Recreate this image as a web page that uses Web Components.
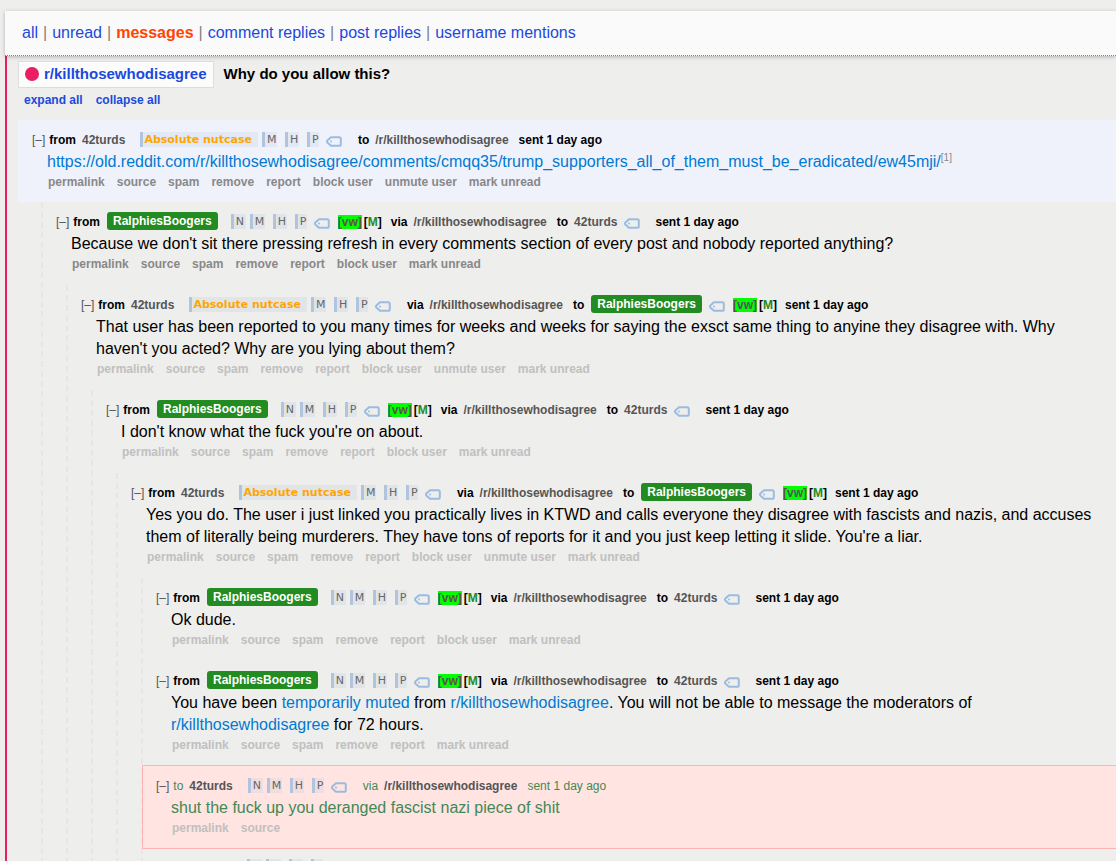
<!DOCTYPE html>
<html lang="en">
<head>
<meta charset="utf-8">
<title>messages</title>
<style>
  html { background:#fff; }
  body {
    margin:0;
    height:calc(100vh - 3px);
    overflow:hidden;
    background:#eeeeec;
    color:#000;
    font:12px/16px "Liberation Sans", Arial, sans-serif;
  }
</style>
</head>
<body>
<inbox-page>
  <menu-tabs slot="menu" items="all,unread,messages,comment replies,post replies,username mentions" current="messages"></menu-tabs>
  <mail-thread sub="r/killthosewhodisagree" subject="Why do you allow this?">
    <mail-message root user="42turds" flair="Absolute nutcase" tags="M H P" to="/r/killthosewhodisagree" actions="permalink,source,spam,remove,report,block user,unmute user,mark unread">
      <mail-link note="[1]">https://old.reddit.com/r/killthosewhodisagree/comments/cmqq35/trump_supporters_all_of_them_must_be_eradicated/ew45mji/</mail-link>
      <mail-message slot="replies" mod user="RalphiesBoogers" tags="N M H P" via="/r/killthosewhodisagree" to="42turds" actions="permalink,source,spam,remove,report,block user,mark unread">
        Because we don't sit there pressing refresh in every comments section of every post and nobody reported anything?
        <mail-message slot="replies" dim user="42turds" flair="Absolute nutcase" tags="M H P" via="/r/killthosewhodisagree" to="RalphiesBoogers" actions="permalink,source,spam,remove,report,block user,unmute user,mark unread">
          That user has been reported to you many times for weeks and weeks for saying the exsct same thing to anyine they disagree with. Why haven't you acted? Why are you lying about them?
          <mail-message slot="replies" dim mod user="RalphiesBoogers" tags="N M H P" via="/r/killthosewhodisagree" to="42turds" actions="permalink,source,spam,remove,report,block user,mark unread">
            I don't know what the fuck you're on about.
            <mail-message slot="replies" dim user="42turds" flair="Absolute nutcase" tags="M H P" via="/r/killthosewhodisagree" to="RalphiesBoogers" actions="permalink,source,spam,remove,report,block user,unmute user,mark unread">
              Yes you do. The user i just linked you practically lives in KTWD and calls everyone they disagree with fascists and nazis, and accuses them of literally being murderers. They have tons of reports for it and you just keep letting it slide. You're a liar.
              <mail-message slot="replies" dim mod user="RalphiesBoogers" tags="N M H P" via="/r/killthosewhodisagree" to="42turds" actions="permalink,source,spam,remove,report,block user,mark unread">Ok dude.</mail-message>
              <mail-message slot="replies" dim mod user="RalphiesBoogers" tags="N M H P" via="/r/killthosewhodisagree" to="42turds" actions="permalink,source,spam,remove,report,mark unread">You have been <mail-link>temporarily muted</mail-link> from <mail-link>r/killthosewhodisagree</mail-link>. You will not be able to message the moderators of <mail-link>r/killthosewhodisagree</mail-link> for 72 hours.</mail-message>
              <mail-message slot="replies" dim reported user="42turds" tags="N M H P" via="/r/killthosewhodisagree" actions="permalink,source">shut the fuck up you deranged fascist nazi piece of shit</mail-message>
              <mail-message slot="replies" dim next user="" tags="N M H P" actions=""></mail-message>
            </mail-message>
          </mail-message>
        </mail-message>
      </mail-message>
    </mail-message>
  </mail-thread>
</inbox-page>

<script>
// inbox-page - menu bar on top, threads below
class InboxPage extends HTMLElement {
  constructor() {
    super();
    this.attachShadow({ mode: 'open' });
  }

  connectedCallback() {
    this.shadowRoot.innerHTML = `
      <style>
        :host { display:block; padding:11px 0 0 5px; }
        header {
          position:relative;
          background:#fafafa;
          border-bottom:1px dotted gray;
          box-shadow:0 1px 4px rgba(0,0,0,0.25);
        }
      </style>
      <header><slot name="menu"></slot></header>
      <main><slot></slot></main>
    `;
  }
}

class MenuTabs extends HTMLElement {
  constructor() {
    super();
    this.attachShadow({ mode: 'open' });
  }

  connectedCallback() {
    const current = this.getAttribute('current');
    const links = this.getAttribute('items').split(',').map(item =>
      `<a href="#"${item === current ? ' class="current"' : ''}>${item}</a>`);
    this.shadowRoot.innerHTML = `
      <style>
        :host { display:block; }
        nav { display:flex; gap:5px; padding:11px 17px; font-size:16px; line-height:22px; color:gray; white-space:nowrap; }
        a { color:#1a49dd; text-decoration:none; }
        .current { color:#ff4500; font-weight:bold; }
      </style>
      <nav>${links.join('<span>|</span>')}</nav>
    `;
  }
}

class MailThread extends HTMLElement {
  constructor() {
    super();
    this.attachShadow({ mode: 'open' });
  }

  connectedCallback() {
    this.shadowRoot.innerHTML = `
      <style>
        :host { display:block; border-left:2px solid #e91e63; padding:5px 0 0 11px; }
        a { color:#1a49dd; text-decoration:none; }
        .subject { display:flex; gap:10px; font-size:15px; line-height:24px; font-weight:bold; }
        .sub { display:flex; align-items:center; gap:5px; padding:0 6px 1px; background:#fcfcfc; border:1px solid #ddd; }
        .dot { width:14px; height:14px; border-radius:50%; background:#e91e63; }
        h1 { margin:1px 0 0; font:inherit; }
        .controls { display:flex; gap:13px; padding:4px 6px 12px; font-weight:bold; }
      </style>
      <div class="subject">
        <a class="sub" href="#"><span class="dot"></span>${this.getAttribute('sub')}</a>
        <h1>${this.getAttribute('subject')}</h1>
      </div>
      <div class="controls"><a href="#">expand all</a><a href="#">collapse all</a></div>
      <slot></slot>
    `;
  }
}

// mail-link - link in a message body, with an optional footnote number
class MailLink extends HTMLElement {
  constructor() {
    super();
    this.attachShadow({ mode: 'open' });
  }

  connectedCallback() {
    const note = this.getAttribute('note');
    this.shadowRoot.innerHTML = `
      <style>
        :host { display:inline; }
        a { color:#0079d3; text-decoration:none; }
        sup { font-size:10px; line-height:0; color:#888; }
      </style><a href="#"><slot></slot></a>${note ? `<sup>${note}</sup>` : ''}`;
  }
}

// user-tag - outline of a label, used to tag a user
class UserTag extends HTMLElement {
  constructor() {
    super();
    this.attachShadow({ mode: 'open' });
  }

  connectedCallback() {
    this.shadowRoot.innerHTML = `
      <style>
        :host { display:block; width:16px; height:11px; }
        svg { display:block; }
      </style>
      <svg width="16" height="11" viewBox="0 0 16 11">
        <path d="M5 1.2H13.2Q14.8 1.2 14.8 2.8V8.2Q14.8 9.8 13.2 9.8H5L1.3 6.4Q.6 5.5 1.3 4.6Z" fill="none" stroke="#9bbce0" stroke-width="2" stroke-linejoin="round"/>
        <circle cx="5" cy="5.5" r="1" fill="#9bbce0"/>
      </svg>
    `;
  }
}

// mail-message - one message, with its replies in the "replies" slot
class MailMessage extends HTMLElement {
  constructor() {
    super();
    this.attachShadow({ mode: 'open' });
  }

  userLink(name) {
    const mod = name === 'RalphiesBoogers';
    return `<a href="#" class="${mod ? 'chip' : 'name'}">${name}</a>`;
  }

  tagline() {
    const user = this.getAttribute('user');
    const flair = this.getAttribute('flair');
    const via = this.getAttribute('via');
    const to = this.getAttribute('to');
    const reported = this.hasAttribute('reported');
    const modMarks = '<span class="vw">[vw]</span><span class="m">[<b>M</b>]</span>';
    const tags = this.getAttribute('tags').split(' ').map(t => `<span class="note ${t}">${t}</span>`).join('');

    let html = `<a href="#" class="toggle">[–]</a><span class="from">${reported ? 'to' : 'from'}</span>`;
    html += this.userLink(user);
    html += `<span class="notes">${flair ? `<span class="flair">${flair}</span>` : ''}${tags}</span><user-tag></user-tag>`;
    html += this.hasAttribute('mod') ? modMarks : '<span class="gap"></span>';
    if (via) html += `<span class="word">via</span><a href="#" class="name">${via}</a>`;
    if (to) {
      html += `<span class="word${via ? ' to' : ''}">to</span>${this.userLink(to)}`;
      if (via) html += '<user-tag></user-tag>' + (this.hasAttribute('mod') ? '<span class="gap"></span>' : modMarks);
    }
    return html + '<span class="sent">sent 1 day ago</span>';
  }

  connectedCallback() {
    const next = this.hasAttribute('next');
    const actions = this.getAttribute('actions').split(',').map(a => `<a href="#">${a}</a>`).join('');
    const tagline = next
      ? '<span class="notes next"><i class="note N"></i><i class="note M"></i><i class="note H"></i><i class="note P"></i></span>'
      : this.tagline();
    this.shadowRoot.innerHTML = `
      <style>
        :host { display:block; --action:#888; --text:#000; }
        :host([dim]) { --action:#c0c0c0; }
        :host([reported]) { --text:#448855; margin:-1px 0 0 -1px; }
        a { text-decoration:none; color:inherit; }
        .entry { padding:10px 14px 13px 13px; }
        :host([root]) > .entry { background:#eff2fb; padding:10px 14px 12px; }
        :host([reported]) > .entry { background:#ffe4e1; border:1px solid #ffb3b3; border-right:0; padding-bottom:12px; }
        .tagline { display:flex; align-items:center; height:19px; font-weight:bold; white-space:nowrap; color:var(--text); }
        :host([next]) .tagline { align-items:flex-start; }
        .toggle { color:#555; font-weight:normal; margin-right:4px; }
        .name { color:#555; margin-left:6px; }
        .chip { background:#228b22; color:#fff; border-radius:3px; padding:1px 6px; margin:-2px 0 0 7px; }
        .notes { display:flex; align-items:center; margin-left:13px; }
        .name + .notes { margin-left:15px; }
        .flair, .note {
          height:15px;
          line-height:15px;
          border-left:3px solid #b0c4de;
          background:rgba(176,196,222,0.2);
          font-family:"DejaVu Sans", Verdana, sans-serif;
        }
        .flair { padding:0 6px 0 1px; margin-right:4px; color:orange; font-size:11px; }
        .note { box-sizing:border-box; width:15px; padding-left:2px; color:#666; font-size:11px; font-weight:normal; }
        .N { margin-right:4px; }
        .M, .H { margin-right:8px; }
        .H { width:14px; }
        .P { width:12px; }
        user-tag { margin:3px 0 0 7px; }
        .gap { width:7px; }
        .vw { background:#0f0; color:#555; margin-left:8px; line-height:14px; }
        .m { margin-left:2px; }
        .m b { color:#228b22; }
        .word { margin-left:9px; }
        .to { margin-left:10px; }
        .sent { margin-left:8px; }
        .name + .sent { margin-left:10px; }
        :host([reported]) .from, :host([reported]) .word, :host([reported]) .sent { font-weight:normal; }
        .body { padding:2px 0 0 15px; font-size:16px; line-height:22px; color:var(--text); }
        .actions { display:flex; gap:12px; padding:1px 0 0 16px; font-weight:bold; color:var(--action); white-space:nowrap; }
        .replies { margin-left:23px; border-left:2px dashed #e6e6e4; }
        .replies.none { display:none; }
        .next { margin-left:91px; }
      </style>
      <div class="entry">
        <div class="tagline">${tagline}</div>
        <div class="body"><slot></slot></div>
        <div class="actions">${actions}</div>
      </div>
      <div class="replies${this.querySelector('[slot=replies]') ? '' : ' none'}"><slot name="replies"></slot></div>
    `;
  }
}

customElements.define('user-tag', UserTag);
customElements.define('mail-link', MailLink);
customElements.define('mail-message', MailMessage);
customElements.define('mail-thread', MailThread);
customElements.define('menu-tabs', MenuTabs);
customElements.define('inbox-page', InboxPage);
</script>
</body>
</html>
